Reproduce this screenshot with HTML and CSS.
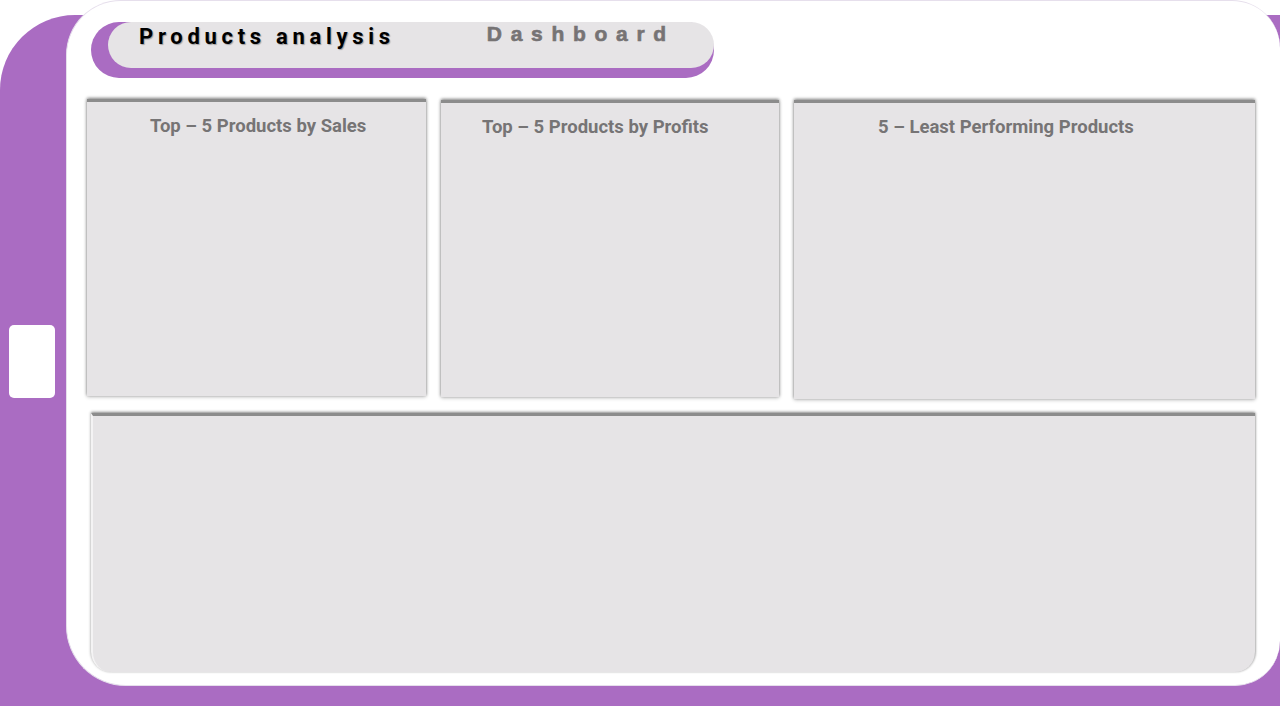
FILE: index.html
```html
<!DOCTYPE html>
<html>
<head>
<meta charset="utf-8">
<link rel="stylesheet" href="styles.css">
</head>
<body>
<div class="stage">
  <div class="purple">
    <aside class="rail"><div class="tab"></div></aside>
    <main class="panel">
      <header class="pill">
        <div class="pill-inner">
          <span class="title">Products analysis</span>
          <span class="subtitle">Dashboard</span>
        </div>
      </header>
      <section class="row">
        <div class="card c1"><h2 class="card-title">Top – 5 Products by Sales</h2></div>
        <div class="card c2"><h2 class="card-title">Top – 5 Products by Profits</h2></div>
        <div class="card c3"><h2 class="card-title">5 – Least Performing Products</h2></div>
      </section>
      <section class="card wide"></section>
    </main>
  </div>
</div>
</body>
</html>
```
FILE: styles.css
```css
* { box-sizing: border-box; }
html, body { margin: 0; padding: 0; background: #fff; }
.stage { width: 1280px; height: 720px; overflow: hidden; background: #fff; }
.purple {
  margin-top: 15px;
  height: 691px;
  background: #aa6cc2;
  border-top-left-radius: 75px;
  display: flex;
  padding-left: 9px;
}
.rail { width: 46px; margin-right: 11px; }
.tab {
  margin-top: 310px;
  width: 46px;
  height: 73px;
  background: #fff;
  border-radius: 5px;
}
.panel {
  flex: 1;
  margin-top: -15px;
  height: 686px;
  background: #fff;
  border: 1px solid #e6dfec;
  border-right: none;
  border-radius: 55px 48px 45px 60px;
  padding: 21px 25px 0 20px;
  display: flex;
  flex-direction: column;
}
.pill {
  margin-left: 4px;
  width: 623px;
  height: 56px;
  background: #aa6cc2;
  border-radius: 28px;
  padding-left: 17px;
}
.pill-inner {
  height: 46px;
  background: #e6e4e6;
  border-radius: 23px;
  display: flex;
  align-items: flex-start;
  padding-left: 31px;
}
.title {
  font-family: Roboto, "Liberation Sans", sans-serif;
  font-weight: 700;
  font-size: 22px;
  letter-spacing: 4.7px;
  color: #000;
  line-height: 26px;
  margin-top: 2px;
  text-shadow: 1px 1px 1px rgba(0,0,0,0.3);
}
.subtitle {
  font-family: "Liberation Sans", Arial, sans-serif;
  font-weight: 700;
  font-size: 21px;
  letter-spacing: 8.7px;
  color: #767374;
  line-height: 24px;
  margin-left: 92px;
  -webkit-text-stroke: 0.6px #767374;
}
.row {
  display: flex;
  gap: 15px;
  margin-top: 21px;
  height: 299px;
  align-items: flex-start;
}
.card {
  background: #e6e4e6;
  border-top: 3px solid #8c8c8c;
  box-shadow: 0 -1px 3px rgba(0,0,0,0.45), 0 1px 4px rgba(0,0,0,0.22);
}
.c1 { width: 339px; height: 297px; }
.c2 { width: 338px; height: 297px; margin-top: 1px; }
.c3 { width: 461px; height: 299px; margin-top: 1px; }
.card-title {
  margin: 0;
  font-family: Roboto, "Liberation Sans", sans-serif;
  font-weight: 700;
  font-size: 18.5px;
  color: #767475;
  line-height: 22px;
  margin-top: 13px;
  white-space: nowrap;
}
.c1 .card-title { padding-left: 63px; }
.c2 .card-title { padding-left: 41px; }
.c3 .card-title { padding-left: 84px; }
.wide {
  margin-top: 15px;
  margin-left: 4px;
  height: 259px;
  border-radius: 0 0 20px 20px;
  border-left: 2px solid #f4f3f4;
  box-shadow: 0 -1px 3px rgba(0,0,0,0.45), 1px 0 2px rgba(0,0,0,0.12);
}
```
